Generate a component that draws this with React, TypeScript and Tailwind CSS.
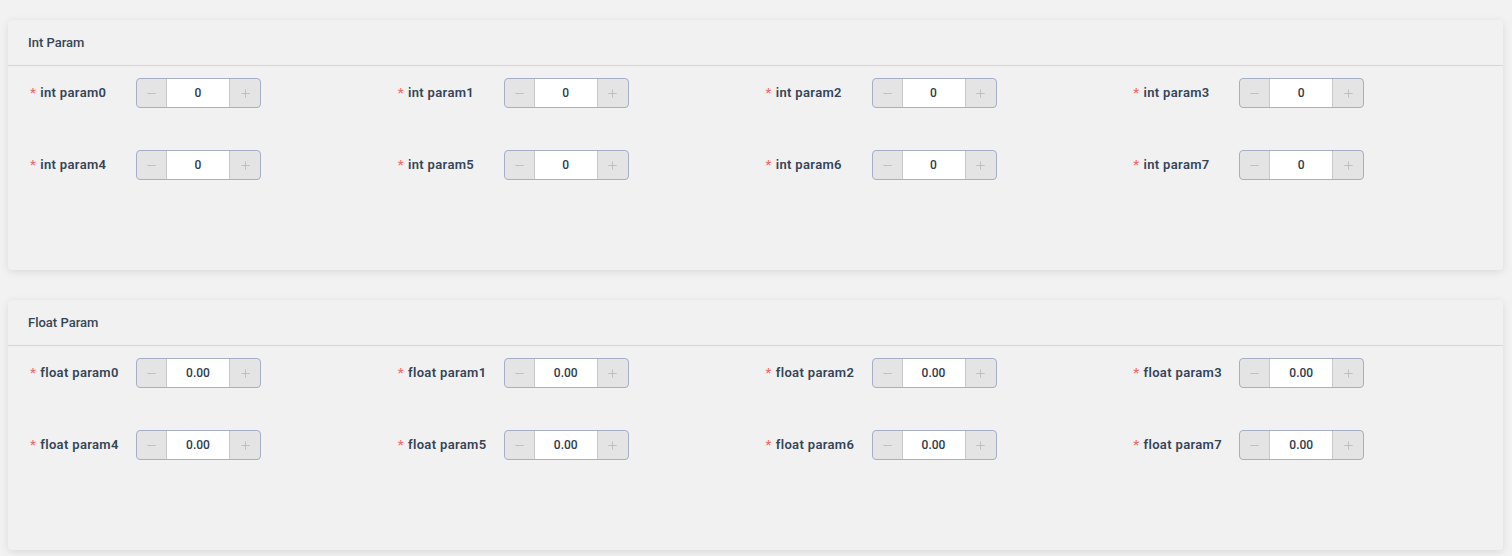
import { Minus, Plus } from "lucide-react";

interface StepperProps {
  value: string;
}

function Stepper({ value }: StepperProps) {
  return (
    <div className="flex h-[30px] w-[125px] overflow-hidden rounded-[4px] border border-[#a7afc7] bg-[#e4e4e4]">
      <button
        type="button"
        className="flex w-[30px] items-center justify-center border-r border-[#c8c8c8] text-[#b4b4b4]"
      >
        <Minus size={13} strokeWidth={1.4} />
      </button>
      <div className="flex flex-1 items-center justify-center bg-white text-[12px] font-medium text-[#2f3b4c]">
        {value}
      </div>
      <button
        type="button"
        className="flex w-[31px] items-center justify-center border-l border-[#c8c8c8] text-[#b4b4b4]"
      >
        <Plus size={13} strokeWidth={1.4} />
      </button>
    </div>
  );
}

interface ParamCardProps {
  title: string;
  prefix: string;
  value: string;
}

function ParamCard({ title, prefix, value }: ParamCardProps) {
  const items = Array.from({ length: 8 }, (_, i) => `${prefix}${i}`);

  return (
    <section className="mx-2 h-[250px] w-[1495px] rounded-[4px] bg-[#f1f1f1] shadow-[0_2px_8px_rgba(0,0,0,0.1)]">
      <header className="flex h-[46px] items-center border-b border-[#d6d6d6] px-5 text-[13px] font-medium text-[#354558]">
        {title}
      </header>
      <div className="ml-5 grid w-[1471px] grid-cols-4 gap-y-[42px] pt-3">
        {items.map((name) => (
          <div key={name} className="flex h-[30px] items-center">
            <label className="w-[108px] pl-[2px] text-[13px] font-semibold tracking-[0.35px] text-[#354558]">
              <span className="mr-1 text-[#f56c6c]">*</span>
              {name}
            </label>
            <Stepper value={value} />
          </div>
        ))}
      </div>
    </section>
  );
}

export default function App() {
  return (
    <div
      className="flex min-h-[556px] flex-col gap-[30px] overflow-hidden bg-[#f2f2f2] pt-5"
      style={{ fontFamily: "Roboto, 'Open Sans', sans-serif" }}
    >
      <ParamCard title="Int Param" prefix="int param" value="0" />
      <ParamCard title="Float Param" prefix="float param" value="0.00" />
    </div>
  );
}
